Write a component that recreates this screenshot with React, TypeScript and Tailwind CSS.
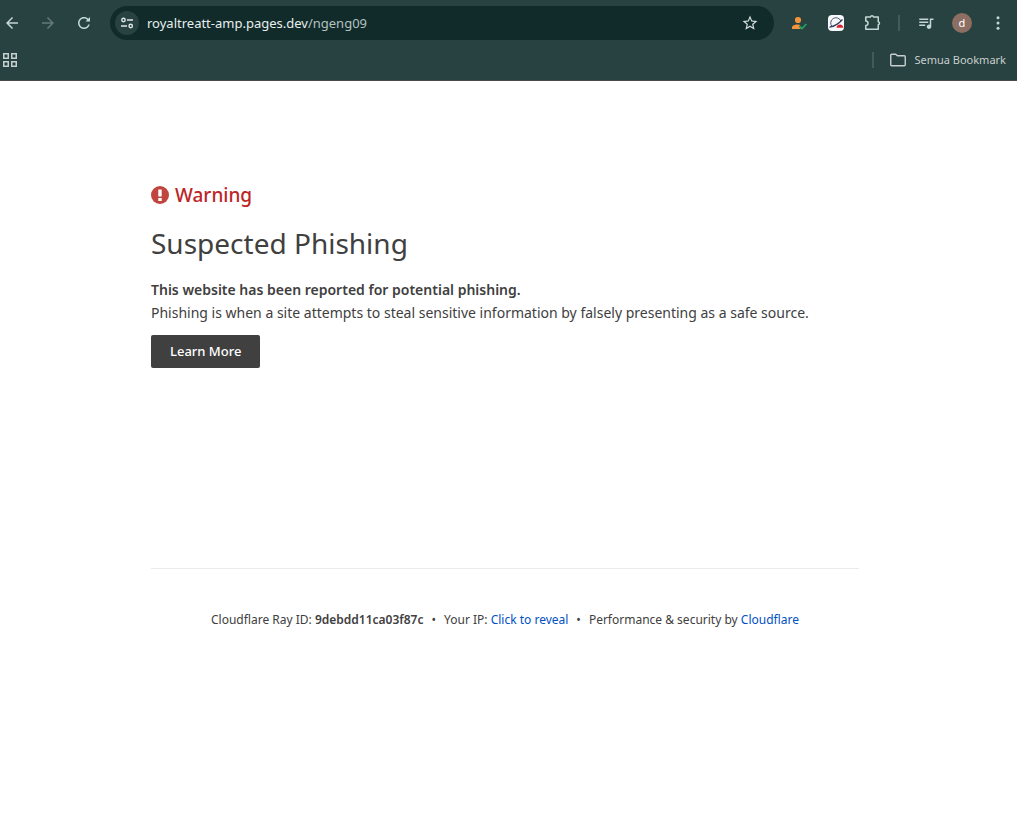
import React from 'react';

const ICON = 'block shrink-0';

function IconButton({ label, children, color = 'text-[#c3d7d4]' }: { label: string; children: React.ReactNode; color?: string }) {
  return (
    <button type="button" aria-label={label} className={`flex size-6 shrink-0 items-center justify-center rounded-full ${color}`}>
      {children}
    </button>
  );
}

function Toolbar() {
  return (
    <div className="flex h-[46px] items-center pr-[7px]">
      <nav aria-label="Navigation" className="flex gap-3">
        <IconButton label="Back">
          <svg className={ICON} width="18" height="18" viewBox="0 0 24 24" fill="currentColor"><path d="M20 11H7.83l5.59-5.59L12 4l-8 8 8 8 1.41-1.41L7.83 13H20v-2z" /></svg>
        </IconButton>
        <IconButton label="Forward" color="text-[#657a78]">
          <svg className={ICON} width="18" height="18" viewBox="0 0 24 24" fill="currentColor"><path d="M12 4l-1.41 1.41L16.17 11H4v2h12.17l-5.58 5.59L12 20l8-8z" /></svg>
        </IconButton>
        <IconButton label="Reload">
          <svg className={ICON} width="18" height="18" viewBox="0 0 24 24" fill="currentColor"><path d="M17.65 6.35C16.2 4.9 14.21 4 12 4c-4.42 0-7.99 3.58-7.99 8s3.57 8 7.99 8c3.73 0 6.84-2.55 7.73-6h-2.08c-.82 2.33-3.04 4-5.65 4-3.31 0-6-2.69-6-6s2.69-6 6-6c1.66 0 3.14.69 4.22 1.78L14 10H20V4z" /></svg>
        </IconButton>
      </nav>

      <div className="ml-[14px] mr-[13px] flex h-[34px] min-w-0 flex-1 items-center rounded-full bg-[#112b2a] pl-[5px] pr-3">
        <button type="button" aria-label="View site information" className="flex size-6 shrink-0 items-center justify-center rounded-full bg-[#284141] text-[#dfe9e7]">
          <svg className={ICON} width="14" height="14" viewBox="0 0 14 14" fill="none" stroke="currentColor" strokeWidth="1.4">
            <circle cx="3.5" cy="4" r="1.7" /><path d="M7 4h6M1 10h6" /><circle cx="10.7" cy="10" r="1.7" />
          </svg>
        </button>
        <a href="#address" className="ml-2 min-w-0 flex-1 truncate text-[13px] leading-5 text-[#b4c2c0]">
          <span className="text-[#e6efed]">royaltreatt-amp.pages.dev</span>/ngeng09
        </a>
        <IconButton label="Bookmark this tab" color="text-[#d3dedc]">
          <svg className={ICON} width="18" height="18" viewBox="0 0 24 24" fill="currentColor"><path d="M22 9.24l-7.19-.62L12 2 9.19 8.63 2 9.24l5.46 4.73L5.82 21 12 17.27 18.18 21l-1.63-7.03L22 9.24zM12 15.4l-3.76 2.27 1-4.28-3.32-2.88 4.38-.38L12 6.1l1.71 4.04 4.38.38-3.32 2.88 1 4.28L12 15.4z" /></svg>
        </IconButton>
      </div>

      <div className="flex items-center gap-[13px]">
        <IconButton label="Account checker">
          <svg className={ICON} width="16" height="16" viewBox="0 0 16 16">
            <circle cx="7" cy="5" r="3.1" fill="#f2953c" />
            <path d="M1 14v-1.5C1 10.5 3.500 9.400 6.500 9.400c1.300 0 2.200.2 2.800.6L8 11.500 9.800 14z" fill="#f2953c" />
            <path d="M8.600 11.300l2.400 2.300L15.400 9" fill="none" stroke="#25a862" strokeWidth="1.5" />
          </svg>
        </IconButton>
        <IconButton label="Browser extension">
          <svg className={ICON} width="16" height="16" viewBox="0 0 16 16">
            <rect width="16" height="16" rx="4" fill="#f7f8fb" />
            <path d="M4 11.500A5.300 5.300 0 1 1 12.900 6" fill="none" stroke="#4c5674" strokeWidth="1" />
            <path d="M1.500 12.200C5.500 11.500 11 8.500 14.500 4.500" fill="none" stroke="#303b5c" strokeWidth="1.2" />
            <path d="M8.500 12.800c.3-2.200 1.800-3.400 3.500-3.400s3 1.200 3.400 3.400z" fill="#d9232e" />
          </svg>
        </IconButton>
        <IconButton label="Extensions">
          <svg className={ICON} width="18" height="18" viewBox="0 0 18 18" fill="none" stroke="currentColor" strokeWidth="1.5" strokeLinejoin="round">
            <path d="M1.750 3h4.700a1.600 1.600 0 0 1 3.100 0h4.700v4.700a1.600 1.600 0 0 1 0 3.100v4.450H1.750v-3.750a2.200 2.200 0 0 0 0-4.500z" />
          </svg>
        </IconButton>
        <div className="h-4 w-[2px] bg-[#405b5a]" />
      </div>

      <div className="ml-[14px] flex items-center gap-3">
        <IconButton label="Media controls">
          <svg className={ICON} width="18" height="18" viewBox="0 0 24 24" fill="currentColor"><path d="M15 6H3v2h12V6zm0 4H3v2h12v-2zM3 16h8v-2H3v2zM17 6v8.180c-.31-.11-.65-.18-1-.18-1.660 0-3 1.340-3 3s1.340 3 3 3 3-1.340 3-3V8h3V6h-5z" /></svg>
        </IconButton>
        <IconButton label="Profile">
          <span className="flex size-5 items-center justify-center rounded-full bg-[#8d6e63] text-[11px] leading-5 text-white">d</span>
        </IconButton>
        <IconButton label="Menu">
          <svg className={ICON} width="18" height="18" viewBox="0 0 18 18" fill="currentColor"><circle cx="9" cy="3.7" r="1.5" /><circle cx="9" cy="9" r="1.5" /><circle cx="9" cy="14.3" r="1.5" /></svg>
        </IconButton>
      </div>
    </div>
  );
}

function BookmarksBar() {
  return (
    <div className="flex h-[34px] items-start justify-between pl-[3px] pr-[11px] text-[#c7d0ce]">
      <button type="button" aria-label="Apps" className="flex h-7 items-center">
        <svg className={ICON} width="14" height="14" viewBox="0 0 14 14" fill="none" stroke="currentColor" strokeWidth="1.5">
          <path d="M.75.75h4.500v4.500H.75zM8.750.75h4.500v4.500h-4.500zM.75 8.750h4.500v4.500H.75zM8.750 8.750h4.500v4.500h-4.500z" />
        </svg>
      </button>
      <div className="flex h-7 items-center gap-4">
        <div className="h-4 w-[2px] bg-[#405b5a]" />
        <button type="button" className="flex items-center gap-2 text-[11px] leading-4">
          <svg className={ICON} width="16" height="14" viewBox="0 0 16 14" fill="none" stroke="currentColor" strokeWidth="1.4" strokeLinejoin="round">
            <path d="M.75 2.200c0-.6.4-1 1-1h4l1.600 1.600h6.900c.6 0 1 .4 1 1v7.900c0 .6-.4 1-1 1H1.750c-.6 0-1-.4-1-1z" />
          </svg>
          Semua Bookmark
        </button>
      </div>
    </div>
  );
}

export default function App() {
  return (
    <div className="min-h-screen bg-white font-['Noto_Sans',sans-serif] text-[#404040]">
      <header className="border-b border-[#4c4a48] bg-[#284141]">
        <Toolbar />
        <BookmarksBar />
      </header>

      <div className="pr-[7px]">
        <div className="mx-auto w-full max-w-[708px]">
          <main className="pt-[98px]">
            <h1>
              <span className="flex items-center gap-[6px] text-[19px] font-medium leading-8 text-[#bd2426]">
                <svg className={ICON} width="18" height="18" viewBox="0 0 18 18">
                  <circle cx="9" cy="9" r="9" fill="#c0453f" />
                  <path d="M7.300 3.500h3.400v7H7.300zM7.300 12h3.400v3H7.300z" fill="#fff" />
                </svg>
                Warning
              </span>
              <span className="mt-3 block text-[28px] font-normal leading-10">Suspected Phishing</span>
            </h1>
            <div className="mt-[15px] text-[14px] leading-[23px]">
              <p><strong className="font-semibold">This website has been reported for potential phishing.</strong></p>
              <p>Phishing is when a site attempts to steal sensitive information by falsely presenting as a safe source.</p>
            </div>
            <button type="button" className="mt-[11px] flex h-[33px] items-start rounded-[2px] bg-[#404040] px-[19px] pt-[6px] text-[13px] font-medium leading-5 text-white">Learn More</button>
          </main>

          <footer className="mt-[200px] border-t border-[#ebebeb] pt-[41px] text-center text-[12px] leading-5">
            <span>Cloudflare Ray ID: <strong className="font-semibold">9debdd11ca03f87c</strong></span>
            <span className="mx-2">•</span>
            <span>Your IP: <button type="button" className="text-[#0051c3]">Click to reveal</button></span>
            <span className="mx-2">•</span>
            <span>Performance &amp; security by <a href="#cloudflare" className="text-[#0051c3]">Cloudflare</a></span>
          </footer>
        </div>
      </div>
    </div>
  );
}
